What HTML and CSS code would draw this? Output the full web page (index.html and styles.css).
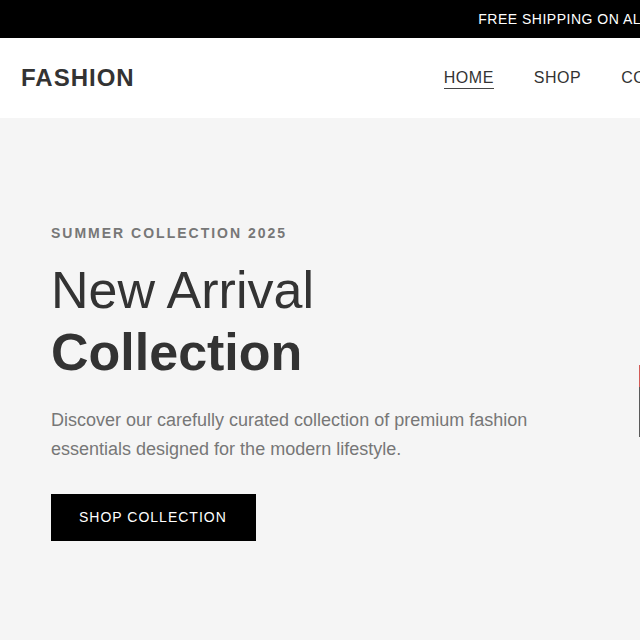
FILE: index.html
```html
<!DOCTYPE html>
<html lang="en">
<head>
<meta charset="utf-8">
<title>Fashion</title>
<link rel="stylesheet" href="styles.css">
</head>
<body>
<div class="page">
  <div class="announcement">FREE SHIPPING ON ALL ORDERS OVER $100</div>
  <header class="header">
    <div class="logo">FASHION</div>
    <nav class="nav">
      <a class="nav-link active" href="#">HOME</a>
      <a class="nav-link" href="#">SHOP</a>
      <a class="nav-link" href="#">COLLECTIONS</a>
      <a class="nav-link" href="#">ABOUT</a>
    </nav>
    <div class="actions">
      <svg width="20" height="20" viewBox="0 0 24 24" fill="none" stroke="#333" stroke-width="2"><circle cx="11" cy="11" r="7"/><path d="M20 20l-4-4"/></svg>
      <svg width="20" height="20" viewBox="0 0 24 24" fill="none" stroke="#333" stroke-width="2"><circle cx="12" cy="8" r="4"/><path d="M4 21c0-4 4-6 8-6s8 2 8 6"/></svg>
      <svg width="20" height="20" viewBox="0 0 24 24" fill="none" stroke="#333" stroke-width="2"><path d="M6 7h12l-1 14H7z"/><path d="M9 7a3 3 0 0 1 6 0"/></svg>
    </div>
  </header>
  <section class="hero">
    <div class="hero-content">
      <div class="eyebrow">SUMMER COLLECTION 2025</div>
      <h1 class="hero-title">New Arrival <span class="hero-title-bold">Collection</span></h1>
      <p class="hero-text">Discover our carefully curated collection of premium fashion essentials designed for the modern lifestyle.</p>
      <a class="btn" href="#">SHOP COLLECTION</a>
    </div>
    <div class="hero-image">
      <svg width="641" height="530" viewBox="0 0 641 530">
        <rect x="0" y="247" width="120" height="22" fill="#d35b57"/>
        <rect x="0" y="269" width="120" height="50" fill="#5a5a5a"/>
      </svg>
    </div>
  </section>
</div>
</body>
</html>
```
FILE: styles.css
```css
html, body {
  margin: 0;
  padding: 0;
}
body {
  font-family: "Liberation Sans", Arial, sans-serif;
  color: #333;
  background: #f5f5f5;
}
.page {
  width: 1278px;
}
.announcement {
  background: #000;
  color: #fff;
  height: 38px;
  line-height: 38px;
  text-align: center;
  font-size: 14px;
  letter-spacing: 0.5px;
}
.header {
  height: 80px;
  background: #fff;
  display: grid;
  grid-template-columns: 1fr auto 1fr;
  align-items: center;
  padding: 0 18px 0 21px;
}
.logo {
  font-size: 24px;
  font-weight: 700;
  letter-spacing: 1px;
  color: #333;
}
.nav {
  display: flex;
  gap: 40px;
}
.nav-link {
  position: relative;
  font-size: 16px;
  letter-spacing: 0.5px;
  color: #333;
  text-decoration: none;
}
.nav-link.active::after {
  content: "";
  position: absolute;
  left: 0;
  right: 0;
  bottom: -2px;
  height: 1px;
  background: #444;
}
.actions {
  justify-self: end;
  display: flex;
  gap: 20px;
}
.hero {
  display: grid;
  grid-template-columns: 639px 639px;
  background: #f5f5f5;
  min-height: 530px;
}
.hero-content {
  padding: 107px 0 0 51px;
}
.eyebrow {
  font-size: 14px;
  line-height: 16px;
  font-weight: 700;
  letter-spacing: 2px;
  color: #777;
  margin-bottom: 18px;
}
.hero-title {
  margin: 0 0 22px;
  font-size: 52px;
  line-height: 1.2;
  font-weight: 400;
  color: #333;
}
.hero-title-bold {
  display: block;
  font-weight: 700;
}
.hero-text {
  margin: 0 0 31px;
  max-width: 520px;
  font-size: 18px;
  line-height: 1.6;
  color: #777;
}
.btn {
  display: inline-block;
  background: #000;
  color: #fff;
  text-decoration: none;
  padding: 15px 29px 16px 28px;
  font-size: 14px;
  line-height: 16px;
  letter-spacing: 1px;
}
.hero-image {
  overflow: hidden;
}
.hero-image svg {
  display: block;
}
```
